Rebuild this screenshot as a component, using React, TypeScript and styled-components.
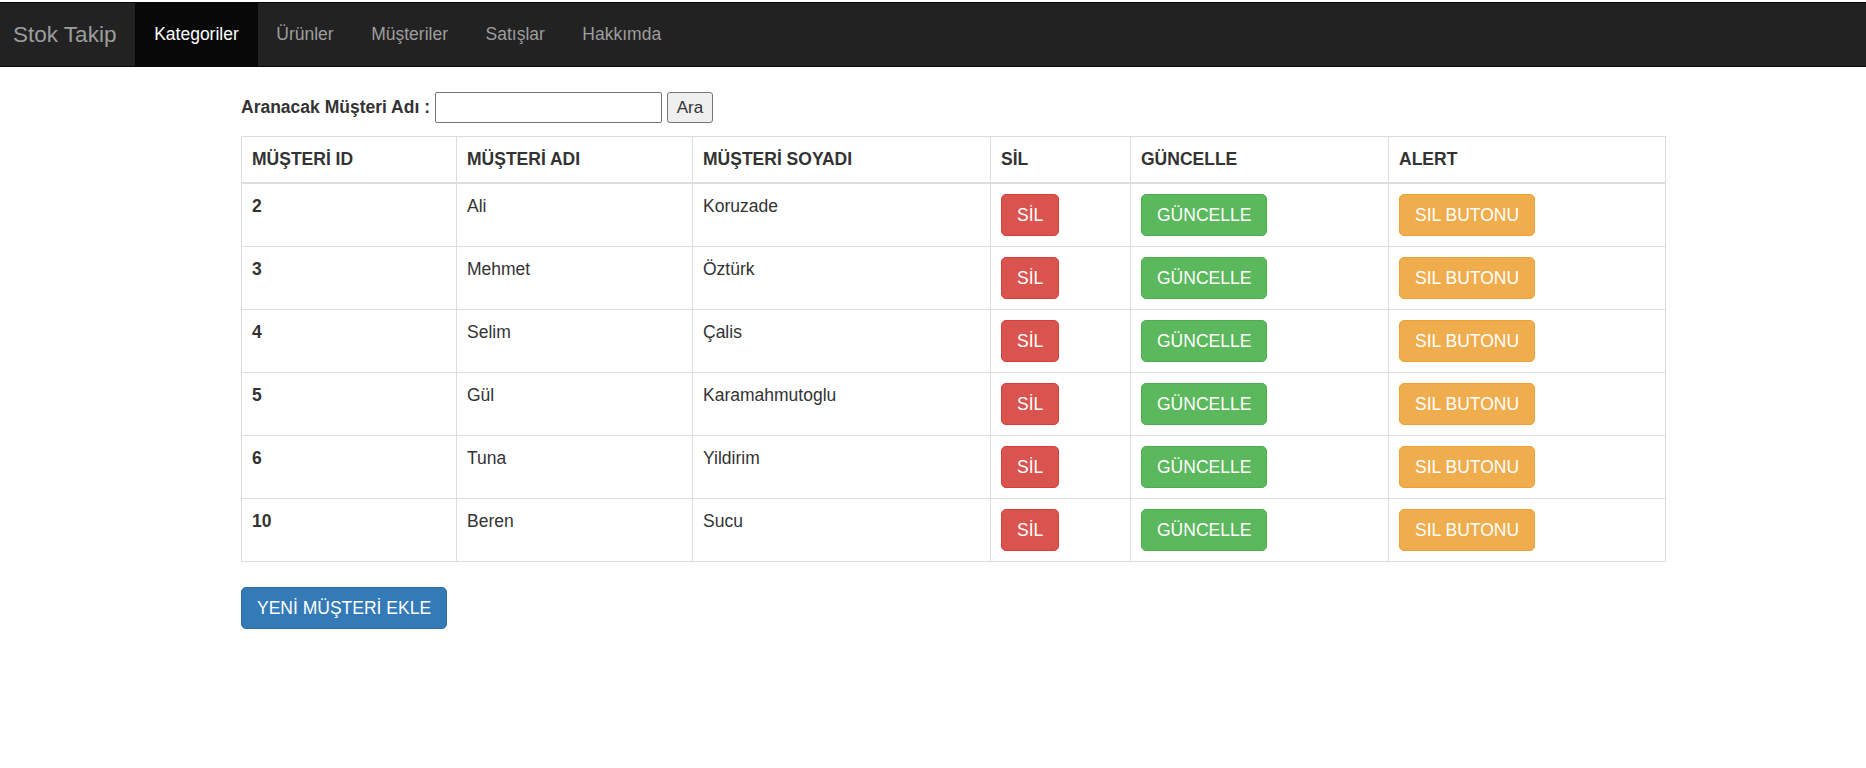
import React from "react";
import styled, { createGlobalStyle } from "styled-components";

const Global = createGlobalStyle`
  html, body { margin: 0; padding: 0; background: #fff; }
  body {
    padding-top: 2px;
    font-family: "Liberation Sans", Arial, Helvetica, sans-serif;
    font-size: 17.5px;
    line-height: 25px;
    color: #333;
  }
  * { box-sizing: border-box; }
`;

const Navbar = styled.nav`
  display: flex;
  align-items: stretch;
  height: 65px;
  background: #222;
  border-top: 1px solid #080808;
  border-bottom: 1px solid #080808;
  margin-bottom: 25px;
`;

const Brand = styled.a`
  display: flex;
  align-items: center;
  padding: 0 19px 0 13px;
  font-size: 22.5px;
  line-height: 25px;
  color: #9d9d9d;
  text-decoration: none;
`;

const NavList = styled.ul`
  display: flex;
  margin: 0;
  padding: 0;
  list-style: none;
`;

const NavItem = styled.li<{ $active?: boolean }>`
  display: flex;
  align-items: center;
  padding: 0 18.75px;
  font-size: 17.5px;
  color: ${(p) => (p.$active ? "#fff" : "#9d9d9d")};
  background: ${(p) => (p.$active ? "#080808" : "transparent")};
`;

const Main = styled.main`
  width: 1424px;
  margin-left: 241px;
`;

const SearchRow = styled.form`
  display: flex;
  align-items: center;
  height: 31px;
  margin-bottom: 13px;
`;

const Label = styled.label`
  font-weight: bold;
  margin-right: 5px;
`;

const SearchInput = styled.input`
  width: 227px;
  height: 31px;
  border: 1px solid #767676;
  border-radius: 2px;
  font-size: 17px;
  padding: 2px 4px;
  margin-right: 5px;
`;

const SearchButton = styled.button`
  width: 46px;
  height: 31px;
  background: #efefef;
  border: 1px solid #767676;
  border-radius: 3px;
  font-family: "Liberation Sans", Arial, sans-serif;
  font-size: 17px;
  color: #333;
  padding: 0;
`;

const Table = styled.table`
  width: 1424px;
  border-collapse: collapse;
  margin-bottom: 25px;
  table-layout: fixed;
`;

const Th = styled.th<{ $w: number }>`
  width: ${(p) => p.$w}px;
  text-align: left;
  padding: 10px;
  line-height: 25px;
  font-weight: bold;
  border: 1px solid #ddd;
  border-bottom: 2px solid #ddd;
  vertical-align: bottom;
`;

const Td = styled.td<{ $bold?: boolean }>`
  padding: 10px;
  line-height: 25px;
  border: 1px solid #ddd;
  vertical-align: top;
  font-weight: ${(p) => (p.$bold ? "bold" : "normal")};
`;

const variants = {
  danger: { bg: "#d9534f", border: "#d43f3a" },
  success: { bg: "#5cb85c", border: "#4cae4c" },
  warning: { bg: "#f0ad4e", border: "#eea236" },
  primary: { bg: "#337ab7", border: "#2e6da4" },
};

const Btn = styled.button<{ $v: keyof typeof variants }>`
  display: inline-block;
  padding: 7.5px 15px;
  font-family: "Liberation Sans", Arial, sans-serif;
  font-size: 17.5px;
  line-height: 25px;
  color: #fff;
  background: ${(p) => variants[p.$v].bg};
  border: 1px solid ${(p) => variants[p.$v].border};
  border-radius: 5px;
  white-space: nowrap;
  cursor: pointer;
`;

const cols = [
  { t: "MÜŞTERİ ID", w: 215 },
  { t: "MÜŞTERİ ADI", w: 236 },
  { t: "MÜŞTERİ SOYADI", w: 298 },
  { t: "SİL", w: 140 },
  { t: "GÜNCELLE", w: 258 },
  { t: "ALERT", w: 277 },
];

const rows = [
  { id: 2, ad: "Ali", soyad: "Koruzade" },
  { id: 3, ad: "Mehmet", soyad: "Öztürk" },
  { id: 4, ad: "Selim", soyad: "Çalis" },
  { id: 5, ad: "Gül", soyad: "Karamahmutoglu" },
  { id: 6, ad: "Tuna", soyad: "Yildirim" },
  { id: 10, ad: "Beren", soyad: "Sucu" },
];

export default function App() {
  return (
    <>
      <Global />
      <Navbar>
        <Brand href="#">Stok Takip</Brand>
        <NavList>
          <NavItem $active>Kategoriler</NavItem>
          <NavItem>Ürünler</NavItem>
          <NavItem>Müşteriler</NavItem>
          <NavItem>Satışlar</NavItem>
          <NavItem>Hakkımda</NavItem>
        </NavList>
      </Navbar>
      <Main>
        <SearchRow onSubmit={(e) => e.preventDefault()}>
          <Label>Aranacak Müşteri Adı :</Label>
          <SearchInput type="text" />
          <SearchButton type="submit">Ara</SearchButton>
        </SearchRow>
        <Table>
          <thead>
            <tr>
              {cols.map((c) => (
                <Th key={c.t} $w={c.w}>
                  {c.t}
                </Th>
              ))}
            </tr>
          </thead>
          <tbody>
            {rows.map((r) => (
              <tr key={r.id}>
                <Td $bold>{r.id}</Td>
                <Td>{r.ad}</Td>
                <Td>{r.soyad}</Td>
                <Td>
                  <Btn $v="danger">SİL</Btn>
                </Td>
                <Td>
                  <Btn $v="success">GÜNCELLE</Btn>
                </Td>
                <Td>
                  <Btn $v="warning">SIL BUTONU</Btn>
                </Td>
              </tr>
            ))}
          </tbody>
        </Table>
        <Btn $v="primary">YENİ MÜŞTERİ EKLE</Btn>
      </Main>
    </>
  );
}
